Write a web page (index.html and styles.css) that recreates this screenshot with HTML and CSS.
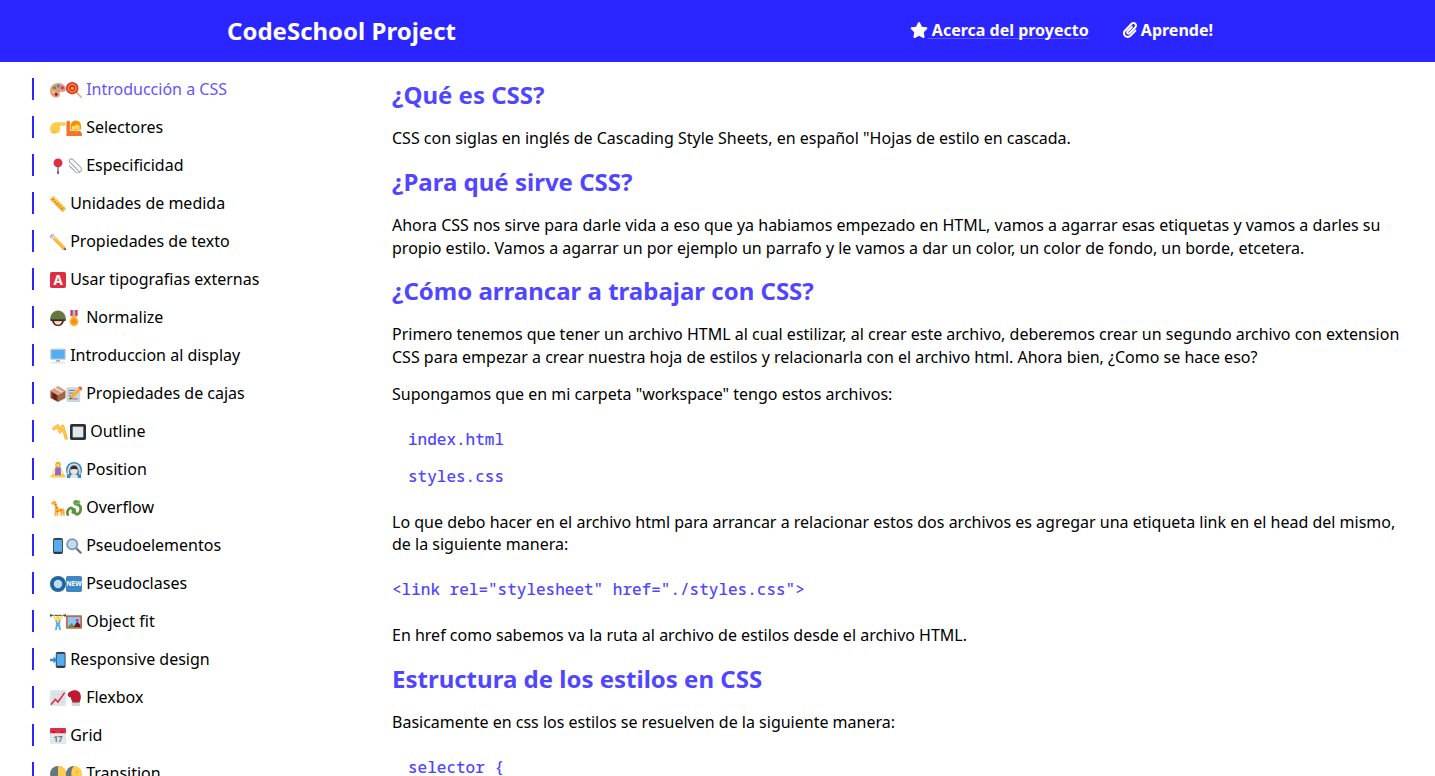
FILE: index.html
```html
<!DOCTYPE html>
<html lang="es">
<head>
    <meta charset="UTF-8">
    <meta name="viewport" content="width=device-width, initial-scale=1.0">
    <title>CodeSchool Project</title>
    <link rel="stylesheet" href="styles.css">
</head>
<body>
    <svg class="sprite" xmlns="http://www.w3.org/2000/svg">
        <symbol id="palette" viewBox="0 0 36 36"><path fill="#D99E82" d="M0 20C0 9 9 2 19 2c10 0 17 7 17 14 0 6-6 7-10 6-4-1-5 1-4 5 1 5-2 8-8 8C7 35 0 29 0 20z"/><circle cx="10" cy="13" r="3.500" fill="#5C913B"/><circle cx="19" cy="9" r="3.500" fill="#3B88C3"/><circle cx="28" cy="13" r="3.500" fill="#DD2E44"/><circle cx="7" cy="22" r="3.500" fill="#FFCC4D"/><circle cx="14" cy="28" r="3" fill="#A0041E"/></symbol>
        <symbol id="lollipop" viewBox="0 0 36 36"><path stroke="#F4B266" stroke-width="4" stroke-linecap="round" d="M20 20l14 14"/><circle cx="14" cy="14" r="14" fill="#DD2E44"/><circle cx="14" cy="14" r="10.500" fill="#F4900C"/><circle cx="14" cy="14" r="7" fill="#DD2E44"/><circle cx="14" cy="14" r="3.500" fill="#FFAC33"/></symbol>
        <symbol id="point" viewBox="0 0 36 36"><path fill="#FFCC4D" d="M0 20C0 12 6 5 14 5h18a4 4 0 010 8H22c2 4 2 15-6 17C6 33 0 29 0 20z"/><path fill="#FFAC33" d="M3 26c3 1 7 1 10-1l-1 4c-4 1-7 0-9-3z"/></symbol>
        <symbol id="raise" viewBox="0 0 36 36"><path fill="#F4742B" d="M1 36V5a4 4 0 018 0v19h18c5 0 9 4 9 8v4z"/><path fill="#F4900C" d="M11 22C8 9 13 1 22 1s14 8 11 21z"/><ellipse cx="22" cy="16" rx="9" ry="10" fill="#FFDC5D"/><path fill="#F4900C" d="M13 14c3 0 10-1 13-5l5 5V6l-9-3-9 3z"/><path fill="#DF1F32" d="M19 22h6v1h-6z"/></symbol>
        <symbol id="pin" viewBox="0 0 36 36"><path stroke="#66757F" stroke-width="3" d="M18 18v14"/><path stroke="#292F33" stroke-width="3" d="M18 30v6"/><circle cx="18" cy="11" r="10" fill="#DD2E44"/></symbol>
        <symbol id="clip" viewBox="0 0 36 36"><path fill="none" stroke="#99AAB5" stroke-width="2.500" stroke-linecap="round" d="M30 31L9 10c-3-3-1-8 3-8 2 0 3 1 4 2l16 16c4 4 3 9 0 11-3 3-8 3-11 0L8 18"/><path fill="none" stroke="#CCD6DD" stroke-width="1.200" d="M26 24L13 11"/></symbol>
        <symbol id="ruler" viewBox="0 0 36 36"><path fill="#FFAC33" d="M9 1l26 26c1 1 1 2 0 3l-5 5c-1 1-2 1-3 0L1 9c-1-1-1-2 0-3l5-5c1-1 2-1 3 0z"/><path fill="#FFCC4D" d="M9 1l26 26-3 3L4 4z"/><path stroke="#292F33" stroke-width="1.500" d="M9 6l-3 3M14 11l-2 2M19 16l-3 3M24 21l-2 2M29 26l-3 3"/></symbol>
        <symbol id="pencil" viewBox="0 0 36 36"><path fill="#D99E82" d="M29 27l-3 8 9 1-1-9z"/><path fill="#292F33" d="M36 36l-5-1 4-4z"/><path fill="#FFAC33" d="M8 2l26 26-6 6L2 8z"/><path fill="#FFCC4D" d="M8 2l26 26-3 3L5 5z"/><path fill="#EA596E" d="M1 8c-2-2-1-4 1-6s4-2 6-1l1 1-7 7z"/><path fill="#CCD6DD" d="M6 1l7 7-5 5-7-7z"/></symbol>
        <symbol id="letter-a" viewBox="0 0 36 36"><rect width="36" height="36" rx="4" fill="#DD2E44"/><text x="18" y="29" text-anchor="middle" class="emoji-text" font-size="30" fill="#fff">A</text></symbol>
        <symbol id="helmet" viewBox="0 0 36 36"><path fill="#662113" d="M5 24c0 7 6 12 13 12s13-5 13-12z"/><path fill="#F7DECE" d="M9 24c0 5 4 9 9 9s9-4 9-9z"/><path fill="#67773B" d="M18 1C8 1 0 10 0 22c0 2 2 3 4 3h28c2 0 4-1 4-3C36 10 28 1 18 1z"/><path fill="#292F33" d="M2 21h32v4H2z"/></symbol>
        <symbol id="medal" viewBox="0 0 36 36"><path fill="#DD2E44" d="M10 0h16v14H10z"/><path fill="#88C9F9" d="M15 0h6v14h-6z"/><path fill="#FFAC33" d="M13 12h10v6H13z"/><circle cx="18" cy="26" r="10" fill="#FFAC33"/><circle cx="18" cy="26" r="6" fill="#F4900C"/></symbol>
        <symbol id="monitor" viewBox="0 0 36 36"><rect y="1" width="36" height="26" rx="3" fill="#CCD6DD"/><rect x="3" y="4" width="30" height="20" fill="#55ACEE"/><path fill="#99AAB5" d="M14 27h8l1 4H13z"/><path fill="#E1E8ED" d="M3 31h30l3 4H0z"/></symbol>
        <symbol id="box" viewBox="0 0 36 36"><path fill="#8A4B38" d="M1 10l17 10v16L1 27z"/><path fill="#A0674B" d="M35 10L18 20v16l17-9z"/><path fill="#662113" d="M6 15l9 6v12l-9-6z"/><path fill="#D99E82" d="M18 0l17 10-17 10L1 10z"/><path fill="#F4E3D1" d="M9 5l17 10 3-2L12 3z"/></symbol>
        <symbol id="memo" viewBox="0 0 36 36"><rect x="1" y="3" width="31" height="33" rx="3" fill="#CCD6DD"/><path stroke="#66757F" stroke-width="2" d="M6 10h14M6 16h10M6 22h8M6 29h20"/><path fill="#FFAC33" d="M30 3l5 5-19 19-7 2 2-7z"/><path fill="#EA596E" d="M30 1c2-1 3 0 5 2s2 3 1 5l-2 2-6-6z"/><path fill="#292F33" d="M9 29l1-4 3 3z"/></symbol>
        <symbol id="part" viewBox="0 0 36 36"><path fill="none" stroke="#FFAC33" stroke-width="7" stroke-linejoin="round" stroke-linecap="round" d="M4 11l9-7 5 14 6-13 8 27"/><path fill="none" stroke="#FFCC4D" stroke-width="3.500" stroke-linejoin="round" stroke-linecap="round" d="M4 11l9-7 5 14 6-13 8 27"/></symbol>
        <symbol id="square" viewBox="0 0 36 36"><rect width="36" height="36" rx="4" fill="#292F33"/><rect x="6" y="6" width="24" height="24" fill="#E1E8ED"/></symbol>
        <symbol id="yoga" viewBox="0 0 36 36"><path fill="#FFCC4D" d="M3 29c3-2 8-2 15-2s12 0 15 2c3 1 3 6-1 6H4c-4 0-4-5-1-6z"/><path stroke="#FFDC5D" stroke-width="3" stroke-linecap="round" d="M12 14L6 27M24 14l6 13"/><path fill="#9268CA" d="M12 12h12l1 18H11z"/><circle cx="18" cy="6" r="6" fill="#F4900C"/><circle cx="18" cy="7" r="4" fill="#FFDC5D"/></symbol>
        <symbol id="arms" viewBox="0 0 36 36"><circle cx="18" cy="18" r="18" fill="#3B88C3"/><path fill="#3B88C3" d="M2 18h32v18H2z"/><path fill="none" stroke="#F7DECE" stroke-width="3.500" d="M5 28C3 14 9 5 18 5s15 9 13 23"/><circle cx="18" cy="19" r="8.500" fill="#F7DECE"/><path fill="#292F33" d="M10 17c0-5 3-8 8-8s8 3 8 8c-3-2-13-2-16 0z"/><path fill="#E1E8ED" d="M9 36c0-6 4-9 9-9s9 3 9 9z"/></symbol>
        <symbol id="giraffe" viewBox="0 0 36 36"><path fill="#FFAC33" d="M3 6l6-5 3 1 3 6 4 11h9c3 0 5 2 5 5v12h-3l-1-9-2 9h-3l-1-9H19l-1 9h-3l-1-9-1 9h-3l1-15-1-11-3 1-5-3z"/><path fill="#C1694F" d="M11 9h3v3h-3zM14 16h3v3h-3zM23 21h3v3h-3zM15 24h3v3h-3z"/></symbol>
        <symbol id="snake" viewBox="0 0 36 36"><path fill="none" stroke="#5C913B" stroke-width="6" stroke-linecap="round" d="M4 33c-3-6 1-13 6-15s7 6 5 12c3-3 4-9 3-11 2 4 1 9 4 12s10-1 11-9c1-7-3-11-8-12-5-1-8-3-3-6"/><ellipse cx="24" cy="5" rx="8" ry="5" fill="#77B255"/><circle cx="22" cy="4" r="1.500" fill="#292F33"/></symbol>
        <symbol id="phone" viewBox="0 0 36 36"><rect x="7" y="0" width="22" height="36" rx="4" fill="#31373D"/><rect x="9" y="4" width="18" height="27" fill="#55ACEE"/></symbol>
        <symbol id="loupe" viewBox="0 0 36 36"><path stroke="#66757F" stroke-width="5" stroke-linecap="round" d="M23 23l10 10"/><circle cx="14" cy="14" r="11.500" fill="#BBDDF5" stroke="#8899A6" stroke-width="4"/></symbol>
        <symbol id="radio" viewBox="0 0 36 36"><circle cx="18" cy="18" r="18" fill="#226699"/><circle cx="18" cy="18" r="9.500" fill="#BBDDF5"/></symbol>
        <symbol id="new-sign" viewBox="0 0 36 36"><rect width="36" height="36" rx="4" fill="#3B88C3"/><text x="18" y="23" text-anchor="middle" class="emoji-text" font-size="15" fill="#fff">NEW</text></symbol>
        <symbol id="lifter" viewBox="0 0 36 36"><path stroke="#292F33" stroke-width="2" d="M0 3h36M2 0v7M34 0v7"/><path stroke="#FFDC5D" stroke-width="3.500" d="M8 3l6 12M28 3l-6 12"/><circle cx="18" cy="9" r="5" fill="#FFDC5D"/><path fill="#55ACEE" d="M12 14h12l-2 9 3 13h-4l-3-10-3 10h-4l3-13z"/><path fill="#FFDC5D" d="M15 14h6l-1 5h-4z"/></symbol>
        <symbol id="frame" viewBox="0 0 36 36"><rect y="3" width="36" height="30" rx="2" fill="#C1694F"/><rect x="4" y="7" width="28" height="22" fill="#88C9F9"/><path fill="#5C913B" d="M4 29l9-9 6 9z"/><path fill="#662113" d="M17 29l8-12 7 7v5z"/><circle cx="25" cy="14" r="3" fill="#DD2E44"/></symbol>
        <symbol id="phone-in" viewBox="0 0 36 36"><rect x="13" y="0" width="22" height="36" rx="4" fill="#31373D"/><rect x="15" y="4" width="18" height="27" fill="#55ACEE"/><path fill="#3B88C3" d="M0 15h8v-5l8 8-8 8v-5H0z"/></symbol>
        <symbol id="chart" viewBox="0 0 36 36"><rect width="36" height="36" rx="3" fill="#E1E8ED"/><path stroke="#CCD6DD" stroke-width="1.500" d="M9 0v36M18 0v36M27 0v36M0 9h36M0 18h36M0 27h36"/><path fill="none" stroke="#DD2E44" stroke-width="3.500" d="M2 33l10-12 6 6L33 6"/></symbol>
        <symbol id="glove" viewBox="0 0 36 36"><path fill="#CCD6DD" d="M13 25h18v11H13z"/><path fill="#BE1931" d="M15 1c8-2 17 1 18 11 1 6 0 10-2 14-4 1-13 1-17 0-2-3-3-6-3-9-5-1-8-4-7-8 1-4 5-6 11-8z"/><path fill="#A0041E" d="M14 26h17v2H14z"/></symbol>
        <symbol id="calendar" viewBox="0 0 36 36"><rect y="3" width="36" height="33" rx="3" fill="#E1E8ED"/><path fill="#DD2E44" d="M3 0h30c2 0 3 1 3 3v9H0V3c0-2 1-3 3-3z"/><circle cx="9" cy="9" r="2" fill="#A0041E"/><circle cx="27" cy="9" r="2" fill="#A0041E"/><text x="18" y="31" text-anchor="middle" class="emoji-text" font-size="18" fill="#66757F">17</text></symbol>
        <symbol id="moon-half" viewBox="0 0 36 36"><circle cx="18" cy="18" r="18" fill="#66757F"/><path fill="#FFCC4D" d="M18 0a18 18 0 010 36z"/></symbol>
        <symbol id="moon-gibbous" viewBox="0 0 36 36"><circle cx="18" cy="18" r="18" fill="#FFCC4D"/><path fill="#66757F" d="M18 0a18 18 0 000 36C11 30 9 8 18 0z"/><circle cx="25" cy="13" r="3" fill="#FFAC33"/><circle cx="24" cy="26" r="2.500" fill="#FFAC33"/></symbol>
    </svg>

    <header class="top-bar">
        <h1 class="brand">CodeSchool Project</h1>
        <nav class="top-nav">
            <a class="top-link" href="#">
                <svg class="fa-star" viewBox="0 0 576 512"><path fill="currentColor" d="M259.300 17.800L194 150.200 47.900 171.500c-26.200 3.800-36.700 36.100-17.700 54.600l105.700 103-25 145.500c-4.500 26.300 23.200 46 46.400 33.700L288 439.600l130.700 68.700c23.200 12.200 50.900-7.400 46.400-33.700l-25-145.500 105.700-103c19-18.500 8.500-50.800-17.700-54.600L382 150.200 316.700 17.800c-11.700-23.600-45.600-23.900-57.400 0z"/></svg><span class="underlined"> Acerca del proyecto</span>
            </a>
            <a class="top-link" href="#">
                <svg class="fa-clip" viewBox="0 0 448 512"><path fill="currentColor" d="M43.246 466.142c-58.430-60.289-57.341-157.511 1.386-217.581L254.392 34c44.316-45.332 116.351-45.336 160.671 0 43.890 44.894 43.943 117.329 0 162.276L232.214 383.128c-29.855 30.537-78.633 30.111-107.982-.998-28.275-29.970-27.368-77.473 1.452-106.953l143.743-146.835c6.182-6.314 16.312-6.422 22.626-.241l22.861 22.379c6.315 6.182 6.422 16.312.241 22.626L171.427 319.927c-4.932 5.045-5.236 13.428-.648 18.292 4.372 4.634 11.245 4.711 15.688-.032l182.849-186.851c19.613-20.062 19.613-52.725-.011-72.798-19.189-19.627-49.957-19.637-69.154 0L90.390 293.295c-34.763 35.560-35.299 93.120-1.191 128.313 34.010 35.093 88.985 35.137 123.058.286l172.060-175.999c6.177-6.319 16.307-6.433 22.626-.256l22.877 22.364c6.319 6.177 6.434 16.307.256 22.626l-172.060 175.998c-59.576 60.938-155.943 60.216-214.770-.485z"/></svg>
                Aprende!
            </a>
        </nav>
    </header>

    <div class="layout">
        <ul class="side-nav">
            <li class="side-item active"><svg class="emoji"><use href="#palette"/></svg><svg class="emoji"><use href="#lollipop"/></svg> Introducción a CSS</li>
            <li class="side-item"><svg class="emoji"><use href="#point"/></svg><svg class="emoji"><use href="#raise"/></svg> Selectores</li>
            <li class="side-item"><svg class="emoji"><use href="#pin"/></svg><svg class="emoji"><use href="#clip"/></svg> Especificidad</li>
            <li class="side-item"><svg class="emoji"><use href="#ruler"/></svg> Unidades de medida</li>
            <li class="side-item"><svg class="emoji"><use href="#pencil"/></svg> Propiedades de texto</li>
            <li class="side-item"><svg class="emoji"><use href="#letter-a"/></svg> Usar tipografias externas</li>
            <li class="side-item"><svg class="emoji"><use href="#helmet"/></svg><svg class="emoji"><use href="#medal"/></svg> Normalize</li>
            <li class="side-item"><svg class="emoji"><use href="#monitor"/></svg> Introduccion al display</li>
            <li class="side-item"><svg class="emoji"><use href="#box"/></svg><svg class="emoji"><use href="#memo"/></svg> Propiedades de cajas</li>
            <li class="side-item"><svg class="emoji wide"><use href="#part"/></svg><svg class="emoji"><use href="#square"/></svg> Outline</li>
            <li class="side-item"><svg class="emoji"><use href="#yoga"/></svg><svg class="emoji"><use href="#arms"/></svg> Position</li>
            <li class="side-item"><svg class="emoji"><use href="#giraffe"/></svg><svg class="emoji"><use href="#snake"/></svg> Overflow</li>
            <li class="side-item"><svg class="emoji"><use href="#phone"/></svg><svg class="emoji"><use href="#loupe"/></svg> Pseudoelementos</li>
            <li class="side-item"><svg class="emoji"><use href="#radio"/></svg><svg class="emoji"><use href="#new-sign"/></svg> Pseudoclases</li>
            <li class="side-item"><svg class="emoji"><use href="#lifter"/></svg><svg class="emoji"><use href="#frame"/></svg> Object fit</li>
            <li class="side-item"><svg class="emoji"><use href="#phone-in"/></svg> Responsive design</li>
            <li class="side-item"><svg class="emoji"><use href="#chart"/></svg><svg class="emoji"><use href="#glove"/></svg> Flexbox</li>
            <li class="side-item"><svg class="emoji"><use href="#calendar"/></svg> Grid</li>
            <li class="side-item"><svg class="emoji"><use href="#moon-half"/></svg><svg class="emoji"><use href="#moon-gibbous"/></svg> Transition</li>
        </ul>

        <main class="content">
            <h2>¿Qué es CSS?</h2>
            <p>CSS con siglas en inglés de Cascading Style Sheets, en español "Hojas de estilo en cascada.</p>
            <h2>¿Para qué sirve CSS?</h2>
            <p>Ahora CSS nos sirve para darle vida a eso que ya habiamos empezado en HTML, vamos a agarrar esas etiquetas y vamos a darles su propio estilo. Vamos a agarrar un por ejemplo un parrafo y le vamos a dar un color, un color de fondo, un borde, etcetera.</p>
            <h2>¿Cómo arrancar a trabajar con CSS?</h2>
            <p>Primero tenemos que tener un archivo HTML al cual estilizar, al crear este archivo, deberemos crear un segundo archivo con extension CSS para empezar a crear nuestra hoja de estilos y relacionarla con el archivo html. Ahora bien, ¿Como se hace eso?</p>
            <p>Supongamos que en mi carpeta "workspace" tengo estos archivos:</p>
            <div class="code-block indented">
                <code>index.html</code>
                <code>styles.css</code>
            </div>
            <p>Lo que debo hacer en el archivo html para arrancar a relacionar estos dos archivos es agregar una etiqueta link en el head del mismo, de la siguiente manera:</p>
            <div class="code-block">
                <code>&lt;link rel="stylesheet" href="./styles.css"&gt;</code>
            </div>
            <p>En href como sabemos va la ruta al archivo de estilos desde el archivo HTML.</p>
            <h2>Estructura de los estilos en CSS</h2>
            <p>Basicamente en css los estilos se resuelven de la siguiente manera:</p>
            <div class="code-block indented">
                <code>selector {</code>
            </div>
        </main>
    </div>
</body>
</html>
```

FILE: styles.css
```css
html, body {
    height: 100%;
    overflow: hidden;
}

body {
    margin: 0;
    font-family: "Noto Sans", sans-serif;
    font-size: 16px;
    color: #000;
    background-color: #fff;
}

.sprite {
    display: none;
}

.emoji-text {
    font-family: "Noto Sans", sans-serif;
    font-weight: 700;
}

.top-bar {
    display: flex;
    align-items: center;
    justify-content: space-between;
    box-sizing: border-box;
    height: 62px;
    padding: 0 222px 2px 227px;
    background-color: #2b26ff;
    color: white;
}

.brand {
    margin: 0;
    font-size: 24px;
    font-weight: 700;
}

.top-nav {
    display: flex;
    gap: 34px;
}

.top-link {
    color: white;
    font-weight: 700;
    text-decoration: none;
}

.underlined {
    text-decoration: underline 1px #5f5bff;
    text-decoration-skip-ink: none;
    text-underline-offset: 2px;
}

.fa-star {
    width: 18px;
    height: 16px;
    vertical-align: -2px;
}

.fa-clip {
    width: 14px;
    height: 16px;
    vertical-align: -2px;
}

.layout {
    display: grid;
    grid-template-columns: 392px 1fr;
}

.side-nav {
    list-style: none;
    margin: 16px 0 0;
    padding: 0 0 0 32px;
}

.side-item {
    height: 22px;
    margin-bottom: 16px;
    padding-left: 16px;
    border-left: 2px solid #2b26ff;
    line-height: 22px;
}

.active {
    color: #6454ff;
}

.emoji {
    width: 16px;
    height: 16px;
    vertical-align: -3px;
}

.wide {
    width: 20px;
}

.content {
    padding: 17px 32px 0 0;
    line-height: 22.8px;
}

.content h2 {
    margin: 16px 0;
    font-size: 24px;
    line-height: 32px;
    font-weight: 700;
    color: #5046ff;
}

.content h2:first-child {
    margin-top: 0;
}

.content p {
    margin: 14px 0;
}

.code-block {
    display: flex;
    flex-direction: column;
    gap: 14px;
    margin: 14px 0;
    padding: 8px 0 9.2px;
}

.indented {
    padding-left: 16px;
}

code {
    font-family: "Noto Sans Mono", "DejaVu Sans Mono", monospace;
    font-size: 16px;
    font-weight: 500;
    color: #5046ff;
}
```
